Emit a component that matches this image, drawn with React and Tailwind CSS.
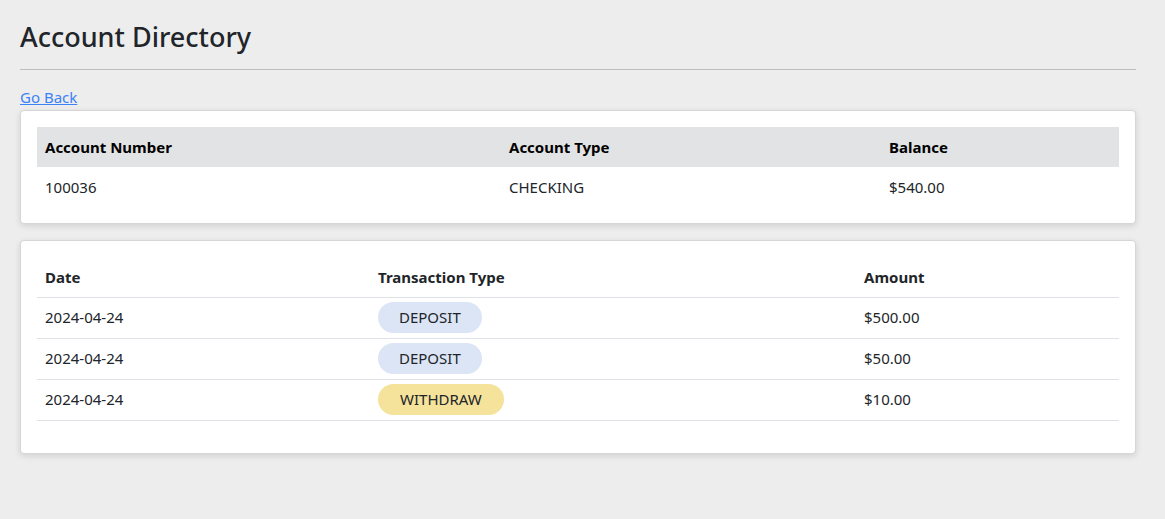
import React from 'react';

const account = { number: '100036', type: 'CHECKING', balance: '$540.00' };

const transactions = [
  { date: '2024-04-24', type: 'DEPOSIT', amount: '$500.00' },
  { date: '2024-04-24', type: 'DEPOSIT', amount: '$50.00' },
  { date: '2024-04-24', type: 'WITHDRAW', amount: '$10.00' },
];

const TypeBadge = ({ type }) => (
  <span
    className={
      type === 'WITHDRAW'
        ? 'inline-block rounded-full bg-[#f5e29b] px-[22px] py-[4px] leading-[23px]'
        : 'inline-block rounded-full bg-[#dce5f5] px-[21px] py-[4px] leading-[23px]'
    }
  >
    {type}
  </span>
);

export default function App() {
  return (
    <div className="min-h-[519px] bg-[#ededed] pl-5 pr-[29px] pt-[18px] text-[15px] text-[#212529] [font-family:'Noto_Sans',sans-serif]">
      <h1 className="text-[27px] font-medium leading-[38px]">Account Directory</h1>
      <hr className="mt-[13px] border-t border-[#bdbdbd]" />
      <a href="#" className="mt-[17px] block w-fit text-[15px] leading-[20px] text-[#3b82f6] underline">
        Go Back
      </a>

      <div className="mt-[3px] rounded border border-[#d6d6d6] bg-white p-4 shadow-[0_2px_6px_rgba(0,0,0,0.12)]">
        <table className="w-full border-collapse text-left">
          <thead>
            <tr className="bg-[#e2e3e5] text-black">
              <th className="h-10 w-[464px] px-2 font-bold">Account Number</th>
              <th className="h-10 w-[380px] px-2 font-bold">Account Type</th>
              <th className="h-10 px-2 font-bold">Balance</th>
            </tr>
          </thead>
          <tbody>
            <tr>
              <td className="h-10 px-2">{account.number}</td>
              <td className="h-10 px-2">{account.type}</td>
              <td className="h-10 px-2">{account.balance}</td>
            </tr>
          </tbody>
        </table>
      </div>

      <div className="mt-[16px] rounded border border-[#d6d6d6] bg-white p-4 shadow-[0_2px_6px_rgba(0,0,0,0.12)]">
        <table className="mb-4 w-full border-collapse text-left">
          <thead>
            <tr className="border-b border-[#dee2e6]">
              <th className="h-10 w-[333px] px-2 font-bold">Date</th>
              <th className="h-10 w-[486px] px-2 font-bold">Transaction Type</th>
              <th className="h-10 px-2 font-bold">Amount</th>
            </tr>
          </thead>
          <tbody>
            {transactions.map((t, i) => (
              <tr key={i} className="border-b border-[#dee2e6]">
                <td className="h-[41px] px-2">{t.date}</td>
                <td className="h-[41px] px-2">
                  <TypeBadge type={t.type} />
                </td>
                <td className="h-[41px] px-2">{t.amount}</td>
              </tr>
            ))}
          </tbody>
        </table>
      </div>
    </div>
  );
}
